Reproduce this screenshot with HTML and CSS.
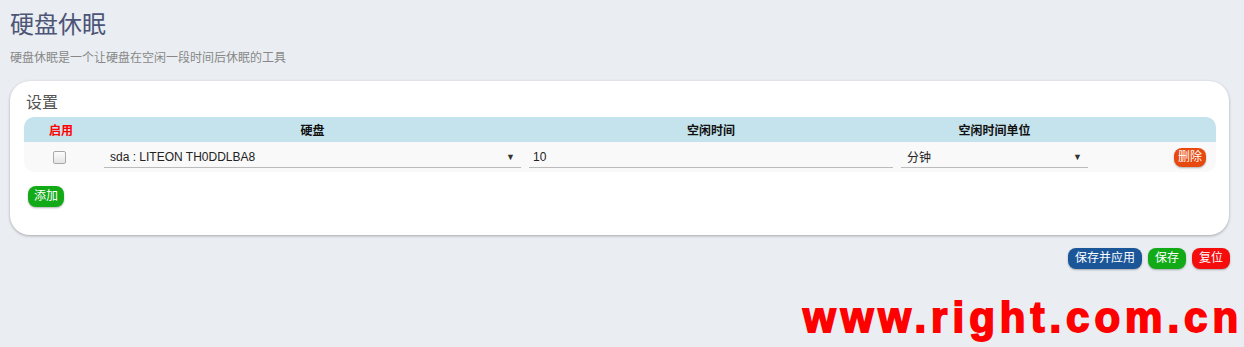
FILE: index.html
```html
<!DOCTYPE html>
<html lang="zh">
<head>
<meta charset="utf-8">
<title>硬盘休眠</title>
<link rel="stylesheet" href="styles.css">
</head>
<body>
<div class="page">
  <h2 class="title">硬盘休眠</h2>
  <div class="desc">硬盘休眠是一个让硬盘在空闲一段时间后休眠的工具</div>
  <div class="card">
    <h3 class="legend">设置</h3>
    <div class="table">
      <div class="row head">
        <div class="c c-en red">启用</div>
        <div class="c c-disk">硬盘</div>
        <div class="c c-time">空闲时间</div>
        <div class="c c-unit">空闲时间单位</div>
        <div class="c c-del"></div>
      </div>
      <div class="row body">
        <div class="c c-en"><span class="cb"></span></div>
        <div class="c c-disk"><div class="sel"><span>sda : LITEON TH0DDLBA8</span><span class="arr">▼</span></div></div>
        <div class="c c-time"><div class="inp">10</div></div>
        <div class="c c-unit"><div class="sel"><span>分钟</span><span class="arr">▼</span></div></div>
        <div class="c c-del"><span class="btn del">删除</span></div>
      </div>
    </div>
    <div class="addbar"><span class="btn add">添加</span></div>
  </div>
  <div class="actions">
    <span class="btn apply">保存并应用</span>
    <span class="btn save">保存</span>
    <span class="btn reset">复位</span>
  </div>
  <div class="wm">www.right.com.cn</div>
</div>
</body>
</html>
```
FILE: styles.css
```css
html, body {
  margin: 0;
  padding: 0;
  background: #eaeef2;
  font-family: "Liberation Sans", Arial, "Noto Sans CJK SC", sans-serif;
  font-size: 12px;
  color: #333;
}
.page {
  position: relative;
  width: 1244px;
  height: 347px;
  overflow: hidden;
  padding: 0 14px 0 10px;
  box-sizing: border-box;
}
.title {
  margin: 0;
  padding-top: 9px;
  font-size: 24px;
  font-weight: normal;
  line-height: 32px;
  color: #4d5577;
}
.desc {
  margin-top: 9px;
  font-size: 12px;
  line-height: 16px;
  color: #888;
}
.card {
  margin-top: 15px;
  margin-right: 1px;
  background: #fff;
  border-radius: 20px;
  box-shadow: 0 1px 3px rgba(0,0,0,0.3);
  padding: 12px 13px 28px 14px;
  height: 154px;
  box-sizing: border-box;
}
.legend {
  margin: 0 0 0 2px;
  font-size: 16px;
  font-weight: normal;
  line-height: 20px;
  color: #555;
}
.table {
  margin-top: 4px;
  border-radius: 10px;
  overflow: hidden;
}
.row {
  display: flex;
  align-items: center;
}
.row.head {
  background: #c4e3ec;
  height: 25px;
  font-weight: bold;
  color: #111;
}
.row.body {
  background: #f9f9f9;
  height: 30px;
}
.c { box-sizing: border-box; }
.head .c { text-align: center; }
.red { color: #f00; }
.c-en { width: 74px; text-align: center; }
.c-disk { width: 427px; padding-left: 6px; padding-right: 4px; }
.c-time { width: 372px; padding: 0 4px; }
.c-unit { width: 192px; padding: 0 1px 0 4px; }
.c-del { flex: 1; text-align: right; padding-right: 10px; }
.cb {
  display: inline-block;
  width: 11px;
  height: 11px;
  border: 1px solid #a8a8a8;
  border-radius: 2px;
  background: linear-gradient(#fcfcfc, #e4e4e4);
  vertical-align: middle;
  margin-right: 3px;
}
.sel, .inp {
  display: flex;
  justify-content: space-between;
  align-items: center;
  height: 21px;
  border-bottom: 1px solid #bbb;
  padding: 0 6px;
  font-size: 12px;
  color: #222;
}
.inp { padding-left: 4px; }
.arr { font-size: 9px; color: #333; }
.btn {
  display: inline-block;
  height: 21px;
  line-height: 21px;
  padding: 0 7px;
  border-radius: 8px;
  color: #fff;
  font-size: 12px;
  box-shadow: 0 1px 2px rgba(0,0,0,0.3);
}
.del { background: #e8490f; height: 19px; line-height: 19px; padding: 0 4px; }
.add { background: #12aa17; padding: 0 6px; }
.addbar { margin-top: 14px; padding-left: 4px; }
.apply { background: #1b5699; }
.save { background: #12aa17; }
.reset { background: #f50d0d; }
.actions {
  display: flex;
  justify-content: flex-end;
  gap: 6px;
  margin-top: 13px;
}
.wm {
  position: absolute;
  left: 803px;
  top: 294px;
  font-family: "Liberation Sans", Arial, sans-serif;
  font-weight: bold;
  font-size: 42px;
  letter-spacing: 5px;
  color: #ff0000;
  line-height: 48px;
  -webkit-text-stroke: 1.8px #ff0000;
}
```
